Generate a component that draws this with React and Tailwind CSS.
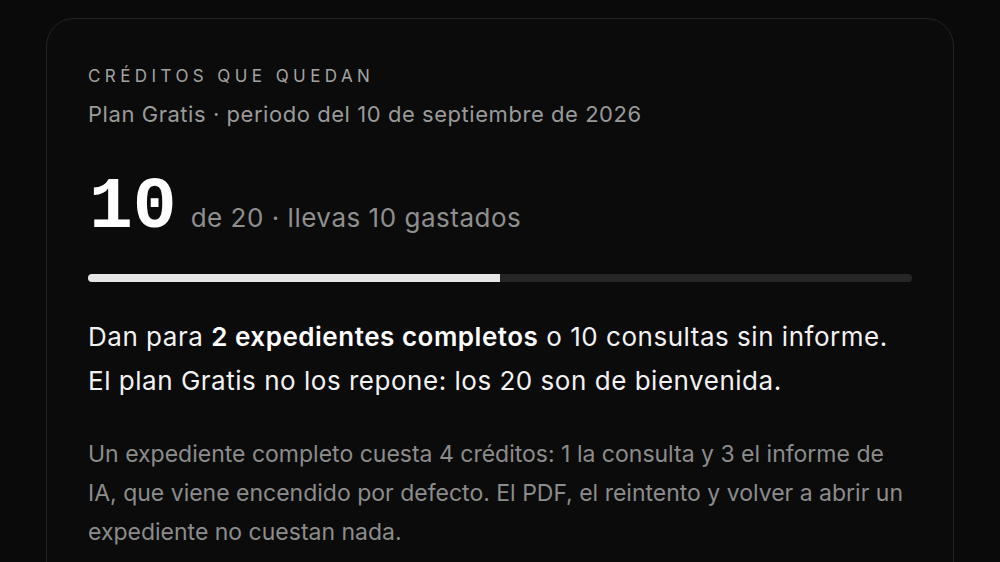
import React from "react";

const credits = { left: 10, total: 20, spent: 10 };

const CreditsCard = () => {
  const pct = (credits.left / credits.total) * 100;

  return (
    <div className="rounded-[28px] border border-[#242424] bg-[#0b0b0b] px-[41px] pt-[49px] pb-10">
      <p className="text-[17px] uppercase leading-none tracking-[0.26em] text-[#a3a3a3]">
        Créditos que quedan
      </p>
      <p className="mt-[18px] text-[22px] leading-none tracking-[0.025em] text-[#9a9a9a]">
        Plan Gratis · periodo del 10 de septiembre de 2026
      </p>

      <div className="mt-[46px] flex items-baseline gap-[14px]">
        <span className="ml-[1px] font-['Liberation_Mono',monospace] text-[73px] font-bold leading-none text-white">
          {credits.left}
        </span>
        <span className="text-[26px] leading-none tracking-[0.02em] text-[#8f8f8f]">
          de {credits.total} · llevas {credits.spent} gastados
        </span>
      </div>

      <div className="mt-[30px] h-2 w-full overflow-hidden rounded-full bg-[#262626]">
        <div className="h-full bg-[#e5e5e5]" style={{ width: `${pct}%` }} />
      </div>

      <p className="mt-[33px] text-[26px] leading-[44px] tracking-[0.02em] text-[#f2f2f2]">
        Dan para <strong className="font-semibold text-white">2 expedientes completos</strong> o 10
        consultas sin informe.
        <br />
        El plan Gratis no los repone: los 20 son de bienvenida.
      </p>

      <p className="mt-[32px] text-[23px] leading-[39px] text-[#8c8c8c]">
        Un expediente completo cuesta 4 créditos: 1 la consulta y 3 el informe de IA, que viene
        encendido por defecto. El PDF, el reintento y volver a abrir un expediente no cuestan nada.
      </p>
    </div>
  );
};

export default function App() {
  return (
    <div className="min-h-screen bg-[#0a0a0a] px-[46px] pt-[18px] font-['Inter',sans-serif] antialiased">
      <CreditsCard />
    </div>
  );
}
